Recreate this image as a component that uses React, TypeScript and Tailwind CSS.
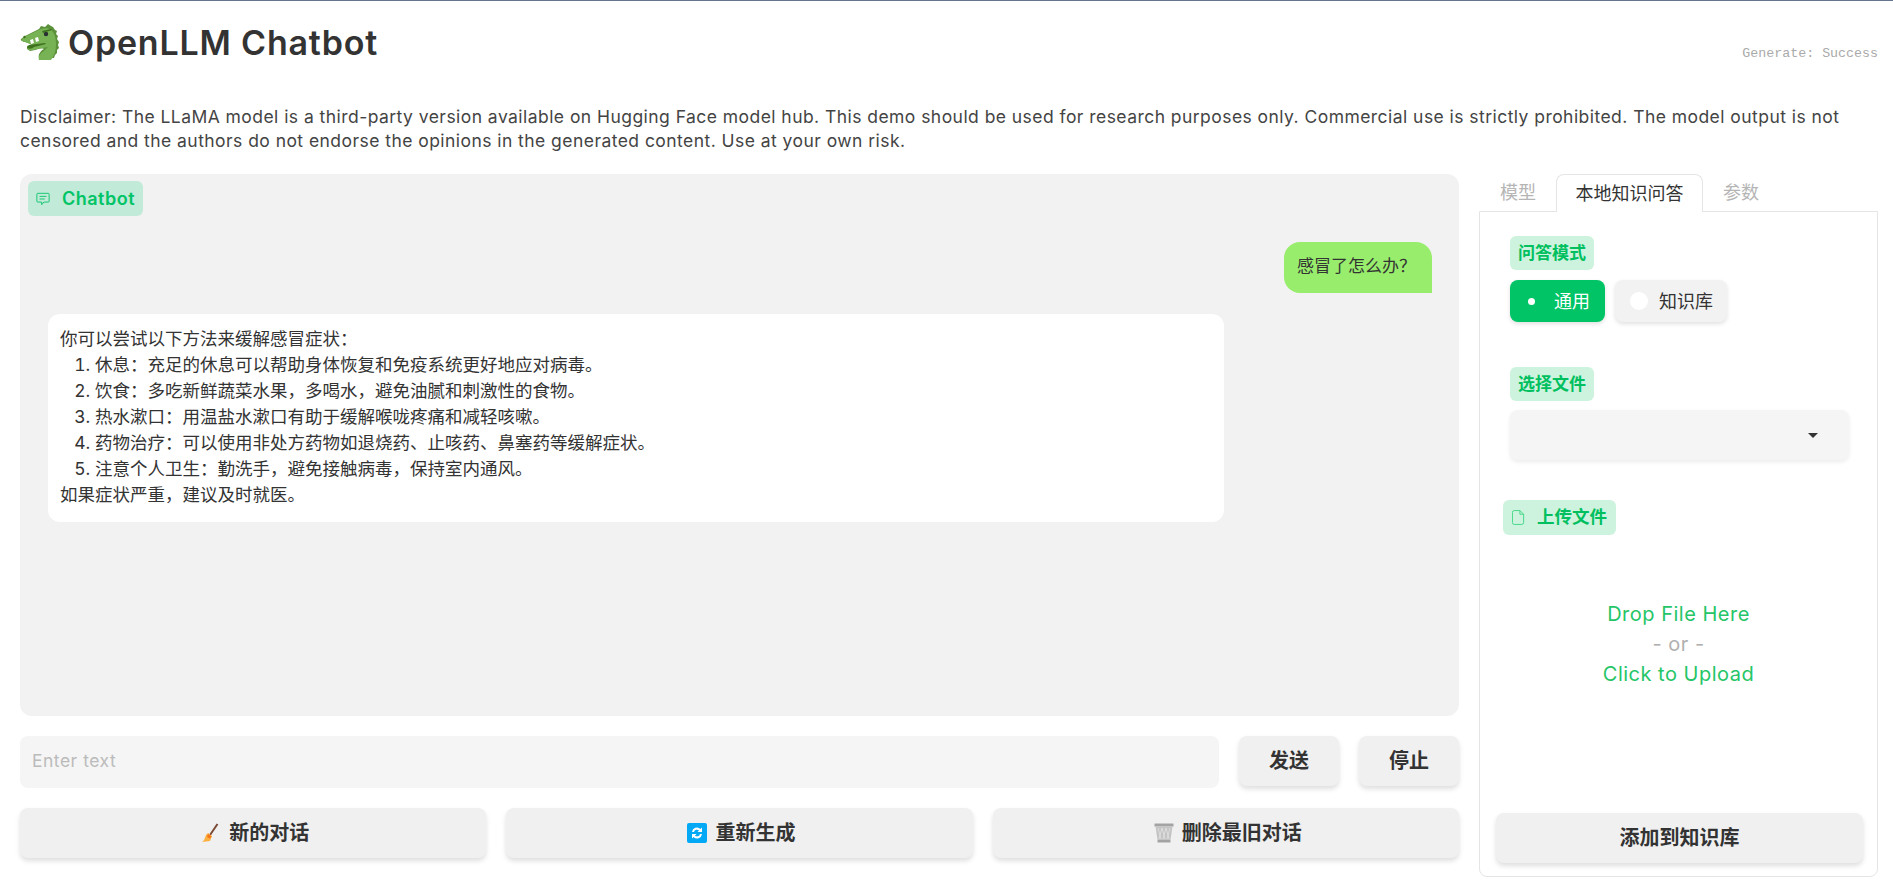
import React from 'react';

const CJK = '"Noto Sans CJK SC"';

const DragonIcon = () => (
  <svg viewBox="0 0 40 40" className="w-[40px] h-[40px] shrink-0">
    <path d="M33 4l2 3 2 1-1 3 2 2-1 3 2 3-1 3 1 3-2 2 0 3-2 2-1 3H19c-1-3 1-7 5-9-3-1-6 0-9 1l-5 1-3-2 0-3 6-2-8-2c-2 0-5-2-4-3l4-3 14-7 2-3 4 1 3-3 3 2z" fill="#5c913b" />
    <path d="M31 7c4 3 5 9 5 14 0 7-2 12-5 16H19c-1-3 1-7 5-9l4-4c-6 1-11 2-15 3-4 1-6-1-6-2l5-3-7-3c-3-1-4-2-3-3l4-3 15-7c4-1 8-1 10 1z" fill="#77b255" />
    <path d="M9 22l-2 3c3 1 5 1 7-1l12-3-1-1z" fill="#3e721d" />
    <path d="M10 17l3-1 1 4-3 1zM15 15l3-1 1 4-3 1z" fill="#fff" />
    <circle cx="26" cy="11" r="2.2" fill="#292f33" />
    <path d="M22 8l9-2 1 1-9 3z" fill="#3e721d" />
    <circle cx="4.500" cy="14" r="1.200" fill="#3e721d" />
  </svg>
);

const ChatIcon = () => (
  <svg viewBox="0 0 16 16" className="w-[14px] h-[14px] shrink-0" fill="none" stroke="#00c465" strokeWidth="1">
    <path d="M2 1.500h12a1 1 0 0 1 1 1v8a1 1 0 0 1-1 1H9l-2.500 3v-3H2a1 1 0 0 1-1-1v-8a1 1 0 0 1 1-1z" />
    <path d="M4 5h8M4 8h6" />
  </svg>
);

const FileIcon = () => (
  <svg viewBox="0 0 14 16" className="w-[13px] h-[15px] shrink-0" fill="none" stroke="#3fd685" strokeWidth="1">
    <path d="M2.500 0.500h6l4 4v9a2 2 0 0 1-2 2h-8a2 2 0 0 1-2-2v-11a2 2 0 0 1 2-2z" />
    <path d="M8.500 0.500v4h4" />
  </svg>
);

const BroomIcon = () => (
  <svg viewBox="0 0 20 20" className="w-[20px] h-[20px] shrink-0">
    <path d="M16.500 1L9 12" stroke="#7a4a35" strokeWidth="2" />
    <path d="M7 10l4 3-2 5-8 1c2-1 3-4 4-7z" fill="#fbb040" />
    <path d="M7 11l3.500 2.500-1.500 2-3-1.500z" fill="#f4731c" />
  </svg>
);

const RefreshIcon = () => (
  <svg viewBox="0 0 20 20" className="w-[20px] h-[20px] shrink-0">
    <rect width="20" height="20" rx="2" fill="#03a9f4" />
    <path d="M5 9a5 5 0 0 1 8.500-3L15 4.500V9h-4.500l1.500-1.500A3 3 0 0 0 7 9z" fill="#fff" />
    <path d="M15 11a5 5 0 0 1-8.500 3L5 15.500V11h4.500L8 12.500A3 3 0 0 0 13 11z" fill="#fff" />
  </svg>
);

const TrashIcon = () => (
  <svg viewBox="0 0 20 20" className="w-[20px] h-[20px] shrink-0">
    <rect x="0.500" y="0.500" width="19" height="3" fill="#a3a3a3" />
    <path d="M1.500 3.500h17L16.500 17h-13z" fill="#c4c4c4" />
    <path d="M4 5l3 11M8 5l3 11M12 5l3 11M16 5l-3 11M12 5L9 16M8 5L5 16" stroke="#e6e6e6" strokeWidth="0.700" />
    <rect x="3.500" y="17" width="13" height="2.500" fill="#a3a3a3" />
  </svg>
);

const Label = ({ children }: { children: React.ReactNode }) => (
  <span className="inline-block self-start h-[34px] leading-[34px] px-2 rounded-md bg-[#cdf3de] text-[#00bf5f] text-[17px] font-bold">
    {children}
  </span>
);

const answers = [
  '休息：充足的休息可以帮助身体恢复和免疫系统更好地应对病毒。',
  '饮食：多吃新鲜蔬菜水果，多喝水，避免油腻和刺激性的食物。',
  '热水漱口：用温盐水漱口有助于缓解喉咙疼痛和减轻咳嗽。',
  '药物治疗：可以使用非处方药物如退烧药、止咳药、鼻塞药等缓解症状。',
  '注意个人卫生：勤洗手，避免接触病毒，保持室内通风。',
];

const btn =
  'flex items-center justify-center gap-2 h-[50px] rounded-lg bg-[#f0f0f0] shadow-[0_3px_5px_rgba(0,0,0,0.13)] text-[#333] text-[20px] font-bold';

export default function App() {
  return (
    <div
      className="w-full h-[892px] overflow-hidden bg-white border-t border-[#64748b] pl-5 pr-[15px] text-[#3c3c3c]"
      style={{ fontFamily: `Inter, ${CJK}, sans-serif` }}
    >
      <div className="flex items-start justify-between h-[88px]">
        <div className="flex items-center gap-2 pt-[22px]">
          <DragonIcon />
          <h1 className="text-[34px] leading-[40px] font-semibold tracking-[0.8px] text-[#333]">OpenLLM Chatbot</h1>
        </div>
        <div className="pt-[43px] text-[13.300px] text-[#aaa]" style={{ fontFamily: '"Liberation Mono", monospace' }}>
          Generate: Success
        </div>
      </div>

      <p className="text-[17.500px] leading-[24px] tracking-[0.45px] h-[48px] mt-[16px] text-[#444]">
        Disclaimer: The LLaMA model is a third-party version available on Hugging Face model hub. This demo should be used for research purposes only. Commercial use is strictly prohibited. The model output is not censored and the authors do not endorse the opinions in the generated content. Use at your own risk.
      </p>

      <div className="flex gap-5 mt-[21px]">
        <div className="w-[1439px] shrink-0 flex flex-col">
          <div className="relative h-[542px] rounded-xl bg-[#f2f2f2] px-7 pt-[68px]">
            <div className="absolute left-2 top-[7px] flex items-center gap-3 h-[35px] px-2 rounded-md bg-[#c2ead9] text-[#00c465] text-[18px] tracking-[0.5px] font-semibold">
              <ChatIcon />
              Chatbot
            </div>
            <div className="flex justify-end">
              <div className="w-[148px] h-[51px] leading-[49px] pl-[13px] rounded-t-2xl rounded-bl-2xl bg-[#98ee6c] text-[#333] text-[17px] mr-[-1px]">
                感冒了怎么办？
              </div>
            </div>
            <div className="mt-[21px] w-[1176px] h-[208px] rounded-xl bg-white px-3 py-3 text-[17.500px] leading-[26px] text-[#333]">
              <div>你可以尝试以下方法来缓解感冒症状：</div>
              <ol className="list-decimal pl-[35px]">
                {answers.map((a) => (
                  <li key={a}>{a}</li>
                ))}
              </ol>
              <div>如果症状严重，建议及时就医。</div>
            </div>
          </div>

          <div className="flex items-start gap-5 mt-5">
            <div className="flex-1 h-[52px] flex items-center px-3 pb-[2px] rounded-lg bg-[#f5f5f5] text-[17.500px] tracking-[0.5px] text-[#bbb]">
              Enter text
            </div>
            <div className={`${btn} w-[100px]`}>发送</div>
            <div className={`${btn} w-[100px]`}>停止</div>
          </div>

          <div className="grid grid-cols-3 gap-5 mt-5">
            <div className={`${btn} pl-1`}>
              <BroomIcon />
              新的对话
            </div>
            <div className={`${btn} pl-1`}>
              <RefreshIcon />
              重新生成
            </div>
            <div className={`${btn} pl-1`}>
              <TrashIcon />
              删除最旧对话
            </div>
          </div>
        </div>

        <div className="w-[399px] shrink-0 flex flex-col">
          <div className="flex h-[37px] pl-[1px] text-[18px]">
            <div className="w-[76px] flex items-center justify-center text-[#b5b5b5]">模型</div>
            <div className="w-[147px] h-[38px] flex items-center justify-center rounded-t-lg border border-b-0 border-[#e5e5e5] bg-white relative z-10 text-[#333]">
              本地知识问答
            </div>
            <div className="w-[76px] flex items-center justify-center text-[#b5b5b5]">参数</div>
          </div>
          <div className="h-[666px] flex flex-col rounded-b-lg border border-[#e5e5e5] px-[14px] pb-[13px]">
            <div className="flex flex-col pl-[16px] pr-[14px] pt-[24px]">
              <Label>问答模式</Label>
              <div className="flex gap-[10px] mt-[10px] text-[18px]">
                <div className="flex items-center w-[95px] h-[42px] pl-[18px] rounded-lg bg-[#00c465] text-white shadow-[0_2px_4px_rgba(0,0,0,0.12)]">
                  <span className="w-[7px] h-[7px] rounded-full bg-white mr-[19px]" />
                  通用
                </div>
                <div className="flex items-center w-[112px] h-[42px] pl-[15px] rounded-lg bg-[#f2f2f2] text-[#333] shadow-[0_2px_4px_rgba(0,0,0,0.12)]">
                  <span className="w-[18px] h-[18px] rounded-full bg-white mr-[11px]" />
                  知识库
                </div>
              </div>
            </div>

            <div className="flex flex-col pl-[16px] pr-[14px] mt-[45px]">
              <Label>选择文件</Label>
              <div className="flex items-center justify-end h-[50px] mt-[9px] pr-[31px] rounded-lg bg-[#f5f5f5] shadow-[0_2px_4px_rgba(0,0,0,0.08)]">
                <svg viewBox="0 0 10 5" className="w-[10px] h-[5px]">
                  <path d="M0 0h10L5 5z" fill="#333" />
                </svg>
              </div>
            </div>

            <div className="mt-[40px] ml-[9px]">
              <span className="inline-flex items-center gap-3 h-[35px] px-[9px] rounded-md bg-[#cdf3de] text-[#00bf5f] text-[17.500px] font-bold">
                <FileIcon />
                上传文件
              </span>
            </div>

            <div className="flex flex-col items-center mt-[64px] text-[20px] tracking-[0.5px] leading-[30px] text-[#25c568]">
              <div>Drop File Here</div>
              <div className="text-[#b0b0b0]">- or -</div>
              <div>Click to Upload</div>
            </div>

            <div className={`${btn} mt-auto ml-[2px] w-[367px]`}>添加到知识库</div>
          </div>
        </div>
      </div>
    </div>
  );
}
